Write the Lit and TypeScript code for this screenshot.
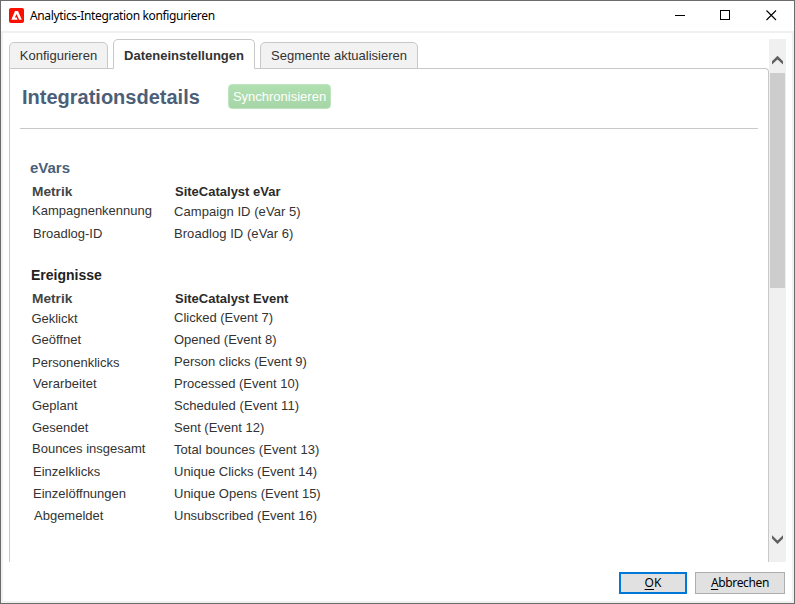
import { LitElement, html, css, svg } from "lit";
import { customElement } from "lit/decorators.js";
import { styleMap } from "lit/directives/style-map.js";

interface Cell {
  text: string;
  /** horizontal inset inside the cell */
  x: number;
  /** vertical nudge inside the row */
  y?: number;
  spacing?: number;
}
type Row = [Cell, Cell];

const row = (a: string, x: number, y: number, b: string, s = 0, t = 0): Row => [
  { text: a, x, y, spacing: s },
  { text: b, x: 0, spacing: t },
];

const EVARS: Row[] = [
  row("Kampagnenkennung", 2, -1, "Campaign ID (eVar 5)", 0, 0.06),
  row("Broadlog-ID", 3, 0, "Broadlog ID (eVar 6)", 0, 0.06),
];

const EVENTS: Row[] = [
  row("Geklickt", 1.4, 1, "Clicked (Event 7)"),
  row("Geöffnet", 1.4, 0, "Opened (Event 8)"),
  row("Personenklicks", 2, 1, "Person clicks (Event 9)"),
  row("Verarbeitet", 3, 0, "Processed (Event 10)", 0.08),
  row("Geplant", 2, 0, "Scheduled (Event 11)", 0, 0.05),
  row("Gesendet", 2, 0, "Sent (Event 12)"),
  row("Bounces insgesamt", 2, -1, "Total bounces (Event 13)", 0, 0.07),
  row("Einzelklicks", 3, 0, "Unique Clicks (Event 14)"),
  row("Einzelöffnungen", 3, 0, "Unique Opens (Event 15)"),
  row("Abgemeldet", 4, 0, "Unsubscribed (Event 16)"),
];

@customElement("metric-table")
export class MetricTable extends LitElement {
  static properties = { rows: { attribute: false }, target: {} };
  declare rows: Row[];
  declare target: string;

  static styles = css`
    :host { display: block; }
    .row {
      display: grid;
      grid-template-columns: 144px 1fr;
      height: 22px;
      line-height: 16px;
      font-size: 13px;
      color: #333;
      white-space: nowrap;
    }
    .head { height: 19px; font-weight: bold; color: #2b2b2b; }
    :host(.events) .head { height: 18px; }
    .head .first { color: #444; padding-left: 2px; font-size: 13.7px; }
    .head .second { padding-left: 1px; }
  `;

  private cell(c: Cell) {
    return html`<div
      style=${styleMap({
        paddingLeft: `${c.x}px`,
        paddingTop: `${1 + (c.y ?? 0)}px`,
        letterSpacing: `${c.spacing ?? 0}px`,
      })}
    >${c.text}</div>`;
  }

  render() {
    return html`
      <div class="row head">
        <div class="first">Metrik</div>
        <div class="second">${this.target}</div>
      </div>
      ${this.rows.map((r) => html`<div class="row">${this.cell(r[0])}${this.cell(r[1])}</div>`)}
    `;
  }
}

const chevron = (d: string) => svg`<path d=${d} fill="#606060"></path>`;

@customElement("app-root")
export class AppRoot extends LitElement {
  static styles = css`
    :host {
      display: block;
      width: 795px;
      height: 604px;
      font-family: "Liberation Sans", Arial, sans-serif;
    }
    * { box-sizing: border-box; }
    svg { display: block; }
    .window {
      display: flex;
      flex-direction: column;
      height: 100%;
      border: 1px solid #6f6b6d;
      background: #fff;
      overflow: hidden;
    }
    .titlebar {
      display: flex;
      align-items: center;
      flex: none;
      height: 30px;
      padding-left: 8px;
      font-family: "Noto Sans", sans-serif;
      font-size: 12px;
      color: #000;
    }
    .titlebar .logo { margin-bottom: 2px; }
    .caption { margin: 0 0 2px 6px; flex: 1; letter-spacing: -0.36px; white-space: nowrap; }
    .controls { display: flex; margin-right: -1px; }
    .controls svg { width: 46px; height: 30px; }
    .client {
      display: flex;
      flex-direction: column;
      flex: 1;
      min-height: 0;
      border: 2px solid #f0f0f0;
    }
    .view { display: flex; height: 529px; padding: 6px 6px 0; }
    .page { width: 760px; display: flex; flex-direction: column; }
    .tabs { display: flex; align-items: flex-end; gap: 5px; height: 30px; flex: none; position: relative; z-index: 1; }
    .tab {
      height: 27px;
      border: 1px solid #c8c8c8;
      border-radius: 5px 5px 0 0;
      background: #f2f2f2;
      color: #333;
      font-size: 13px;
      line-height: 25px;
      text-align: center;
      white-space: nowrap;
    }
    .tab.config { width: 99px; }
    .tab.data { width: 142px; height: 30px; line-height: 31px; background: #fff; border-bottom-color: #fff; font-weight: bold; }
    .tab.segments { width: 158px; }
    .panel {
      flex: 1;
      margin-top: -1px;
      border: 1px solid #c8c8c8;
      border-bottom: 0;
      border-radius: 0 4px 0 0;
      padding: 0 10px;
    }
    .heading {
      display: flex;
      align-items: flex-start;
      height: 60px;
      border-bottom: 1px solid #c8c8c8;
    }
    h1 { margin: 16px 0 0 2px; width: 206px; font-size: 20px; line-height: 24px; color: #4b5f79; }
    .sync {
      width: 103px;
      height: 25px;
      margin-top: 15px;
      border: 1px solid #bfe3bf;
      border-radius: 4px;
      background: linear-gradient(#b0dfb0, #a6d5a7);
      color: #fff;
      font-size: 13px;
      line-height: 23px;
      text-align: center;
    }
    .details { padding: 30px 0 0 10px; }
    h2 { margin: 0; font-size: 14px; line-height: 18px; }
    h2.evars-title { color: #4b5f79; font-size: 15px; }
    .evars { margin-top: 7px; }
    h2.events-title { color: #222; margin-top: 19px; padding-left: 1px; }
    .events { margin-top: 7px; }
    .scrollbar { width: 17px; height: 523px; background: #f0f0f0; padding: 0 1px; }
    .arrow { height: 34px; padding-top: 12px; }
    .thumb { height: 215px; width: 15px; background: #cdcdcd; }
    .down { margin-top: 244px; }
    .footer {
      display: flex;
      justify-content: flex-end;
      gap: 8px;
      padding: 10px 7px 0 0;
    }
    .button {
      height: 22px;
      border: 1px solid #adadad;
      background: #e1e1e1;
      font-family: "Noto Sans", sans-serif;
      font-size: 12px;
      line-height: 20px;
      text-align: center;
      color: #000;
    }
    .ok { width: 68px; border: 2px solid #0078d7; line-height: 18px; }
    .cancel { width: 90px; letter-spacing: -0.35px; }
    u { text-underline-offset: 2px; }
  `;

  render() {
    return html`
      <div class="window">
        <div class="titlebar">
          <svg class="logo" width="15" height="15" viewBox="0 0 15 15">
            <rect width="15" height="15" rx="2" fill="#fa0f00"></rect>
            <path d="M6 3h3L12.8 11.8H10.2L7.5 5.9 5.9 9.6H7.7L8.6 11.8H2.3Z" fill="#fff"></path>
          </svg>
          <div class="caption">Analytics-Integration konfigurieren</div>
          <div class="controls">
            <svg viewBox="0 0 46 30"><path d="M18 14.5h10" stroke="#000"></path></svg>
            <svg viewBox="0 0 46 30"><rect x="17.5" y="9.5" width="9" height="9" fill="none" stroke="#000"></rect></svg>
            <svg viewBox="0 0 46 30"><path d="M17.5 9.5l9.5 9.5M27 9.5L17.5 19" stroke="#000" stroke-width="1.1"></path></svg>
          </div>
        </div>
        <div class="client">
          <div class="view">
            <div class="page">
              <div class="tabs">
                <div class="tab config">Konfigurieren</div>
                <div class="tab data">Dateneinstellungen</div>
                <div class="tab segments">Segmente aktualisieren</div>
              </div>
              <div class="panel">
                <div class="heading">
                  <h1>Integrationsdetails</h1>
                  <div class="sync">Synchronisieren</div>
                </div>
                <div class="details">
                  <h2 class="evars-title">eVars</h2>
                  <metric-table class="evars" .rows=${EVARS} target="SiteCatalyst eVar"></metric-table>
                  <h2 class="events-title">Ereignisse</h2>
                  <metric-table class="events" .rows=${EVENTS} target="SiteCatalyst Event"></metric-table>
                </div>
              </div>
            </div>
            <div class="scrollbar">
              <div class="arrow"><svg width="15" height="14">${chevron("M2 10.2L7.5 4.7L13 10.2V13.6L7.5 8.4L2 13.6Z")}</svg></div>
              <div class="thumb"></div>
              <div class="down"><svg width="15" height="14">${chevron("M2 3.2L7.5 8.4L13 3.2V6.6L7.5 12.1L2 6.6Z")}</svg></div>
            </div>
          </div>
          <div class="footer">
            <div class="button ok"><u>O</u>K</div>
            <div class="button cancel"><u>A</u>bbrechen</div>
          </div>
        </div>
      </div>
    `;
  }
}
